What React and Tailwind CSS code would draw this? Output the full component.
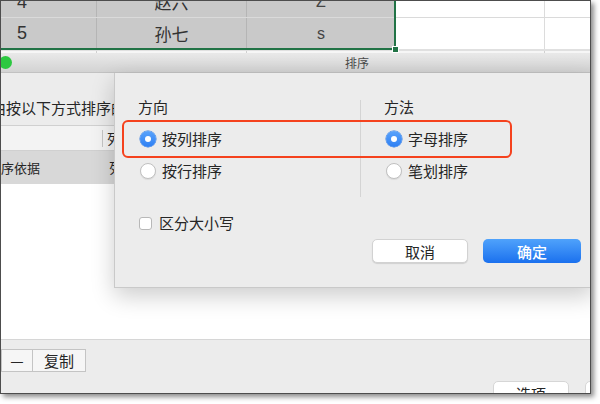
const latin = "font-['Liberation_Sans','Noto_Sans_CJK_SC',sans-serif]"

function Cell({ w, sel, children }) {
  const tone = sel ? 'bg-[#c9c9c9] border-[#b5b5b5]' : 'bg-white border-[#dcdcdc]'
  return <div className={`${w} ${tone} shrink-0 h-full border-r flex items-center justify-center`}>{children}</div>
}

function SheetRow({ cells, h, line }) {
  return (
    <div className={`flex ${h} ${line}`}>
      <div className="w-[96px] shrink-0 h-full bg-[#c9c9c9] border-r border-[#b5b5b5] flex items-center pl-[16px]">
        <span className={`${latin} text-[18px] text-[#333]`}>{cells[0]}</span>
      </div>
      <Cell w="w-[150px]" sel><span className="text-[17px] text-[#333]">{cells[1]}</span></Cell>
      <Cell w="w-[149px]" sel><span className={`${latin} text-[16px] text-[#444]`}>{cells[2]}</span></Cell>
      <Cell w="w-[149px]" />
      <div className="flex-1 h-full bg-white" />
    </div>
  )
}

function Radio({ checked }) {
  if (checked) {
    return (
      <span className="ml-[2px] w-[16px] h-[16px] rounded-full bg-gradient-to-b from-[#5aa3fb] to-[#2d7ff3] flex items-center justify-center shadow-[0_0_0_0.5px_#2a74df]">
        <span className="w-[6px] h-[6px] rounded-full bg-white" />
      </span>
    )
  }
  return <span className="ml-[2px] w-[16px] h-[16px] rounded-full bg-white border border-[#c0c0c0] shadow-[0_1px_1px_rgba(0,0,0,0.08)]" />
}

function Option({ checked, label }) {
  return (
    <div className="h-[20px] flex items-center gap-[6px]">
      <Radio checked={checked} />
      <span className="text-[15px] leading-[20px]">{label}</span>
    </div>
  )
}

function SortSheet() {
  return (
    <div className="absolute left-[113px] top-[72px] w-[480px] h-[215px] bg-[#ececec] border-l border-b border-[#c9c9c9] shadow-[0_8px_22px_rgba(0,0,0,0.2)] pl-[23px] pt-[24px] text-[#262626]">
      <div className="flex">
        <div className="w-[222px] flex flex-col gap-[12px]">
          <div className="text-[15px] leading-[20px]">方向</div>
          <Option checked label="按列排序" />
          <Option label="按行排序" />
        </div>
        <div className="w-px h-[97px] mt-[3px] bg-[#d4d4d4]" />
        <div className="pl-[23px] flex flex-col gap-[12px]">
          <div className="text-[15px] leading-[20px]">方法</div>
          <Option checked label="字母排序" />
          <Option label="笔划排序" />
        </div>
      </div>

      <div className="mt-[16px] h-[20px] flex items-center">
        <span className="ml-[1px] w-[13px] h-[13px] rounded-[3px] bg-white border border-[#b8b8b8]" />
        <span className="ml-[7px] text-[15px] leading-[20px]">区分大小写</span>
      </div>

      <div className="mt-[6px] ml-[234px] flex gap-[15px]">
        <button className="w-[96px] h-[24px] rounded-[5px] bg-white border border-[#d2d2d2] shadow-[0_1px_1px_rgba(0,0,0,0.12)] text-[15px] leading-none text-[#262626]">取消</button>
        <button className="w-[98px] h-[24px] rounded-[5px] bg-gradient-to-b from-[#4fa2fb] to-[#1a70ee] text-[15px] leading-none text-white font-medium">确定</button>
      </div>

      <div className="absolute left-[7px] top-[47px] w-[390px] h-[38px] rounded-[6px] border-2 border-[#f5421e]" />
    </div>
  )
}

export default function App() {
  return (
    <div className="w-[600px] h-[404px] bg-white font-['Noto_Sans_CJK_SC',sans-serif] text-[#262626]">
      <div className="relative w-[591px] h-[394px] border border-[#4d4d4d] shadow-[3px_3px_5px_rgba(0,0,0,0.45)] overflow-hidden flex flex-col">
        {/* spreadsheet behind the dialog */}
        <div className="relative h-[52px] shrink-0 overflow-hidden bg-white">
          <div className="-mt-[14px]">
            <SheetRow cells={['4', '赵六', 'Z']} h="h-[31px]" line="border-b border-[#dadada]" />
            <SheetRow cells={['5', '孙七', 's']} h="h-[31px]" line="" />
            <div className="flex h-[20px] border-t-2 border-[#e0e0e0] bg-[#f6f6f6]">
              <div className="w-[96px] border-r border-[#d0d0d0]" />
              <div className="w-[150px] border-r border-[#d0d0d0]" />
              <div className="w-[149px] border-r border-[#d0d0d0]" />
              <div className="w-[149px] border-r border-[#d0d0d0]" />
            </div>
          </div>
          <div className="absolute left-0 top-0 w-[395px] h-[49px] border-r-2 border-b-2 border-[#217346]" />
          <div className="absolute left-[391px] top-[45px] w-[7px] h-[7px] bg-[#217346] border border-white" />
        </div>

        {/* sort window title bar */}
        <div className="h-[20px] shrink-0 flex items-center border-b border-[#c2c2c2] bg-gradient-to-b from-[#e9e9e9] to-[#d3d3d3]">
          <span className="-ml-[2px] w-[13px] h-[13px] rounded-full bg-[#2cc840]" />
          <span className="ml-[333px] text-[12px] text-[#4a4a4a]">排序</span>
        </div>

        {/* sort window body */}
        <div className="flex-1 flex flex-col bg-[#ececec]">
          <div className="h-[52px] shrink-0 pt-[25px] -ml-[10px] text-[15px] leading-[20px] whitespace-nowrap">由按以下方式排序的</div>
          <div className="h-[26px] shrink-0 flex items-center border-t border-b border-[#d0d0d0] bg-[#f3f3f3]">
            <span className="ml-[101px] w-px h-[17px] bg-[#c6c6c6]" />
            <span className="ml-[4px] text-[14px]">列</span>
          </div>
          <div className="h-[33px] shrink-0 flex items-center bg-[#d8d8d8] text-[13px]">
            <span className="w-[108px]">序依据</span>
            <span className="text-[14px]">列</span>
          </div>
          <div className="flex-1 bg-white" />
          <div className="h-[54px] shrink-0 border-t border-[#d6d6d6] pt-[9px]">
            <div className="flex h-[23px] text-[15px]">
              <button className="w-[32px] bg-[#f6f6f6] border border-[#c4c4c4] leading-none">—</button>
              <button className="w-[53px] bg-[#f6f6f6] border border-l-0 border-[#c4c4c4] leading-none">复制</button>
            </div>
            <div className="flex mt-[9px]">
              <button className="shrink-0 ml-[492px] w-[76px] h-[26px] rounded-[5px] bg-white border border-[#d6d6d6] text-[15px] leading-[22px] text-[#262626]">选项</button>
              <button className="shrink-0 ml-[16px] w-[80px] h-[26px] rounded-[5px] bg-white border border-[#d6d6d6]" />
            </div>
          </div>
        </div>

        <SortSheet />
      </div>
    </div>
  )
}
